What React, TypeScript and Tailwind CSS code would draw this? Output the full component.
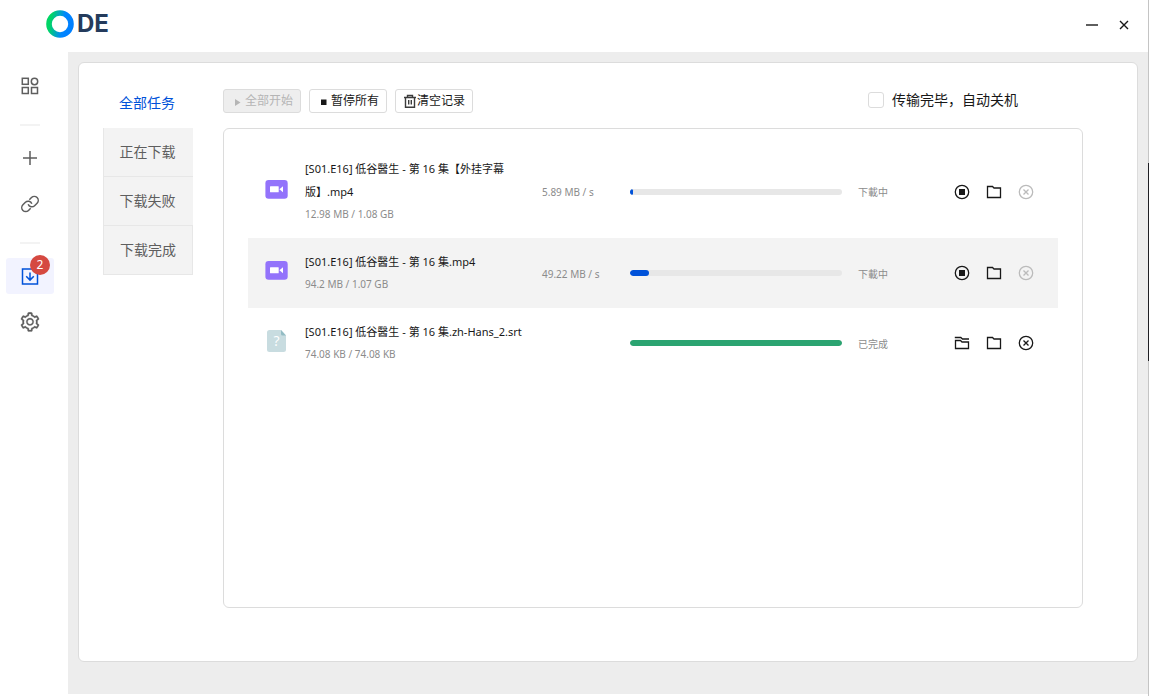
import React, { type ReactNode } from "react";
import { AiOutlineSetting } from "react-icons/ai";

type Task = {
  name: string;
  size: string;
  speed: string;
  percent: number;
  status: string;
  done: boolean;
  kind: "video" | "file";
};

const tasks: Task[] = [
  { name: "[S01.E16] 低谷醫生 - 第 16 集【外挂字幕版】.mp4", size: "12.98 MB / 1.08 GB", speed: "5.89 MB / s", percent: 1.4, status: "下載中", done: false, kind: "video" },
  { name: "[S01.E16] 低谷醫生 - 第 16 集.mp4", size: "94.2 MB / 1.07 GB", speed: "49.22 MB / s", percent: 9, status: "下載中", done: false, kind: "video" },
  { name: "[S01.E16] 低谷醫生 - 第 16 集.zh-Hans_2.srt", size: "74.08 KB / 74.08 KB", speed: "", percent: 100, status: "已完成", done: true, kind: "file" },
];

function Logo() {
  return (
    <div className="flex items-center gap-[3px]">
      <svg width="28" height="28" viewBox="0 0 28 28" aria-hidden="true">
        <defs>
          <linearGradient id="ring" x1="0" x2="1" y1="0.4" y2="0.6">
            <stop offset="0.05" stopColor="#00d566" />
            <stop offset="0.65" stopColor="#0086ff" />
            <stop offset="1" stopColor="#0080ff" />
          </linearGradient>
        </defs>
        <circle cx="14" cy="14" r="11" fill="none" stroke="url(#ring)" strokeWidth="5.6" />
      </svg>
      <span className="[font-family:Inter,sans-serif] text-2xl leading-7 font-bold text-[#243b5c]">DE</span>
    </div>
  );
}

function GridIcon() {
  return (
    <svg width="18" height="18" viewBox="0 0 18 18" fill="none" stroke="currentColor" strokeWidth="1.5" aria-hidden="true">
      <rect x="1.3" y="1.3" width="6" height="6" />
      <circle cx="13.5" cy="4.5" r="3.2" />
      <rect x="1.3" y="10.5" width="6" height="6" />
      <rect x="10.5" y="10.5" width="6" height="6" />
    </svg>
  );
}

function PlusIcon() {
  return (
    <svg width="18" height="18" viewBox="0 0 18 18" fill="none" stroke="currentColor" strokeWidth="1.5" aria-hidden="true">
      <path d="M9 2v14M2 9h14" />
    </svg>
  );
}

function ChainIcon() {
  return (
    <svg width="20" height="20" viewBox="0 0 24 24" fill="none" stroke="currentColor" strokeWidth="1.8" aria-hidden="true">
      <path d="M9.800 12.200a4.700 4.700 0 0 0 7.700 1.800l3-3a4.700 4.700 0 0 0-6.700-6.700L11.200 7" />
      <path d="M14.200 11.800a4.700 4.700 0 0 0-7.700-1.800l-3 3a4.700 4.700 0 0 0 6.700 6.700L12.800 17" />
    </svg>
  );
}

function DownloadIcon() {
  return (
    <svg width="18" height="18" viewBox="0 0 18 18" fill="none" stroke="currentColor" strokeWidth="1.5" aria-hidden="true">
      <rect x="1.5" y="2" width="15" height="15" />
      <path d="M9 5.5V13M5.2 9.3 9 13.1l3.8-3.8" />
    </svg>
  );
}

function VideoIcon() {
  return (
    <svg width="23" height="20" viewBox="0 0 23 20" aria-hidden="true">
      <rect x="0.4" y="0" width="22.3" height="18.7" rx="3.2" fill="#9373fb" />
      <rect x="5" y="6.3" width="8.7" height="6" rx="0.5" fill="#fff" />
      <path d="M14.4 9.3 18 6.3v6z" fill="#fff" />
    </svg>
  );
}

function UnknownFileIcon() {
  return (
    <svg width="23" height="23" viewBox="0 0 23 23" aria-hidden="true">
      <path d="M4.5 0H16l5 5.500v14a2.500 2.500 0 0 1-2.500 2.500h-14A2.500 2.500 0 0 1 2 19.500v-17A2.500 2.500 0 0 1 4.500 0z" fill="#c8dce0" />
      <path d="M16 0 21 5.500h-3.500A1.500 1.500 0 0 1 16 4z" fill="#93bcc4" />
      <text x="11.5" y="16" textAnchor="middle" fontSize="14" fill="#fff" fontFamily="Open Sans">?</text>
    </svg>
  );
}

function StopIcon() {
  return (
    <svg width="16" height="16" viewBox="0 0 16 16" aria-hidden="true">
      <circle cx="8" cy="8" r="6.7" fill="none" stroke="currentColor" strokeWidth="1.3" />
      <rect x="5" y="5" width="6" height="6" fill="currentColor" />
    </svg>
  );
}

function FolderIcon() {
  return (
    <svg width="16" height="16" viewBox="0 0 16 16" fill="none" stroke="currentColor" strokeWidth="1.3" aria-hidden="true">
      <path d="M1.5 2.5h5L8 4h6.500v9.500h-13z" />
    </svg>
  );
}

function OpenFolderIcon() {
  return (
    <svg width="16" height="16" viewBox="0 0 16 16" fill="none" stroke="currentColor" strokeWidth="1.3" aria-hidden="true">
      <path d="M.8 2.5h6L8.500 4h6.500" />
      <path d="M1.5 5.5h5L8 7h6.500v6.500h-13z" />
    </svg>
  );
}

function RemoveIcon() {
  return (
    <svg width="16" height="16" viewBox="0 0 16 16" fill="none" stroke="currentColor" strokeWidth="1.3" aria-hidden="true">
      <circle cx="8" cy="8" r="6.7" />
      <path d="m5.500 5.500 5 5M10.500 5.500l-5 5" />
    </svg>
  );
}

function TrashIcon() {
  return (
    <svg width="14" height="14" viewBox="0 0 14 14" fill="none" stroke="#3c3c3c" strokeWidth="1.4" aria-hidden="true">
      <path d="M2 3.500h12M5.500 3.500v-2h5v2M3.500 3.500v9.800h9V3.500M6.700 6v4.500M9.300 6v4.500" />
    </svg>
  );
}

function NavButton({ label, active, badge, children }: { label: string; active?: boolean; badge?: number; children: ReactNode }) {
  return (
    <button
      type="button"
      aria-label={label}
      className={
        active
          ? "relative flex h-9 w-12 items-center justify-center rounded-[3px] bg-[#f2f3ff] text-[#0052d9]"
          : "relative flex h-9 w-12 items-center justify-center rounded-[3px] text-[#5e5e5e]"
      }
    >
      {children}
      {badge !== undefined && (
        <span className="absolute -top-[3px] right-1 flex size-5 items-center justify-center rounded-full bg-[#d54941] text-xs text-white">
          {badge}
        </span>
      )}
    </button>
  );
}

function ToolButton({ icon, disabled, children }: { icon: ReactNode; disabled?: boolean; children: ReactNode }) {
  return (
    <button
      type="button"
      disabled={disabled}
      className="flex h-6 w-[78px] items-center justify-end rounded-[3px] border border-[#dcdcdc] bg-white pr-[7px] text-xs whitespace-nowrap text-[#181818] disabled:bg-[#eeeeee] disabled:text-[#b5b5b5]"
    >
      <span className="flex w-4 items-center justify-center">{icon}</span>
      {children}
    </button>
  );
}

function TaskRow({ task, highlighted }: { task: Task; highlighted: boolean }) {
  return (
    <li className={highlighted ? "flex items-center bg-[#f3f3f3] py-3 pr-6 pl-[17px]" : "flex items-center py-3 pr-6 pl-[17px]"}>
      <div className="w-10 shrink-0 pb-1">{task.kind === "video" ? <VideoIcon /> : <UnknownFileIcon />}</div>
      <div className="w-[237px] shrink-0 leading-[23px]">
        <p className="w-[230px] text-[11px] text-[#181818]">{task.name}</p>
        <p className="text-[10px] text-[#8b8b8b]">{task.size}</p>
      </div>
      <div className="w-[88px] shrink-0 pt-0.5 text-[10px] text-[#8b8b8b]">{task.speed}</div>
      <div
        role="progressbar"
        aria-label={task.name}
        aria-valuenow={task.percent}
        className="h-1.5 min-w-0 flex-1 overflow-hidden rounded-full bg-[#e7e7e7]"
      >
        <div
          className={task.done ? "h-full rounded-full bg-[#2ba471]" : "h-full rounded-full bg-[#0052d9]"}
          style={{ width: `${task.percent}%` }}
        />
      </div>
      <div className="ml-4 w-24 shrink-0 pt-0.5 text-[10px] text-[#8b8b8b]">{task.status}</div>
      <div className="flex shrink-0 gap-4 text-[#181818]">
        <button type="button" aria-label={task.done ? "打开文件" : "暂停"}>
          {task.done ? <OpenFolderIcon /> : <StopIcon />}
        </button>
        <button type="button" aria-label="打开文件夹">
          <FolderIcon />
        </button>
        <button type="button" aria-label="移除" disabled={!task.done} className="disabled:text-[#bbbbbb]">
          <RemoveIcon />
        </button>
      </div>
    </li>
  );
}

export default function App() {
  return (
    <div className="flex min-h-screen bg-white font-['Noto_Sans','Noto_Sans_CJK_SC',sans-serif] text-[#181818]">
      <div className="flex min-w-0 flex-1 flex-col pb-0.5">
        <header className="flex h-[52px] items-center justify-between pr-4 pb-1 pl-[46px]">
          <Logo />
          <div className="flex gap-4 pt-0.5">
            <button type="button" aria-label="最小化">
              <svg width="16" height="16" viewBox="0 0 16 16" aria-hidden="true">
                <path d="M2 8h12" stroke="#5e5e5e" strokeWidth="2" />
              </svg>
            </button>
            <button type="button" aria-label="关闭">
              <svg width="16" height="16" viewBox="0 0 16 16" aria-hidden="true">
                <path d="m4 4 8 8M12 4l-8 8" stroke="#181818" strokeWidth="1.4" />
              </svg>
            </button>
          </div>
        </header>

        <div className="flex flex-1">
          <nav aria-label="主菜单" className="flex w-[68px] shrink-0 flex-col pt-4 pl-1.5">
            <NavButton label="首页"><GridIcon /></NavButton>
            <hr className="mt-5 mb-3.5 ml-3.5 w-5 border-t-2 border-[#f3f3f3]" />
            <div className="flex flex-col gap-2.5">
              <NavButton label="新建"><PlusIcon /></NavButton>
              <NavButton label="链接"><ChainIcon /></NavButton>
            </div>
            <hr className="mt-5 mb-3.5 ml-3.5 w-5 border-t-2 border-[#f3f3f3]" />
            <div className="flex flex-col gap-2.5">
              <NavButton label="下载" active badge={2}><DownloadIcon /></NavButton>
              <NavButton label="设置"><AiOutlineSetting size={22} stroke="currentColor" strokeWidth={12} /></NavButton>
            </div>
          </nav>

          <main className="flex min-w-0 flex-1 bg-[#ededed] px-2.5 pt-2.5 pb-8">
            <section className="flex min-w-0 flex-1 gap-[30px] rounded-md border border-[#dcdcdc] bg-white pl-6">
              <div className="flex w-[90px] shrink-0 flex-col pt-4 text-sm">
                <button type="button" className="h-[49px] pr-0.5 pb-0.5 text-[#0052d9]">全部任务</button>
                <button type="button" className="h-[49px] border-b border-l border-[#e7e7e7] bg-[#f3f3f3] pr-0.5 text-[#5e5e5e]">正在下载</button>
                <button type="button" className="h-[49px] border-b border-l border-[#e7e7e7] bg-[#f3f3f3] pr-0.5 text-[#5e5e5e]">下载失败</button>
                <button type="button" className="h-[49px] border-r border-b border-l border-[#e7e7e7] bg-[#f3f3f3] text-[#5e5e5e]">下载完成</button>
              </div>

              <div className="flex min-w-0 flex-1 flex-col pr-[54px] pb-[53px]">
                <div className="flex h-[65px] shrink-0 items-center justify-between pt-2.5 pr-[65px]">
                  <div className="flex gap-2">
                    <ToolButton
                      disabled
                      icon={<svg width="8" height="10" viewBox="0 0 8 10" aria-hidden="true"><path d="M2 3v7l5.500-3.500z" fill="currentColor" /></svg>}
                    >
                      全部开始
                    </ToolButton>
                    <ToolButton
                      icon={<svg width="8" height="10" viewBox="0 0 8 10" aria-hidden="true"><rect x="2" y="3.500" width="5.500" height="5.500" fill="currentColor" /></svg>}
                    >
                      暂停所有
                    </ToolButton>
                    <ToolButton icon={<TrashIcon />}>清空记录</ToolButton>
                  </div>
                  <label className="flex items-center gap-2 pb-0.5 text-sm">
                    <input type="checkbox" className="size-4 appearance-none rounded-[3px] border border-[#dcdcdc] bg-white checked:bg-[#0052d9]" />
                    传输完毕，自动关机
                  </label>
                </div>

                <div className="flex-1 rounded-md border border-[#dcdcdc] px-6 py-4">
                  <ul>
                    {tasks.map((task, i) => (
                      <TaskRow key={task.name} task={task} highlighted={i % 2 === 1} />
                    ))}
                  </ul>
                </div>
              </div>
            </section>
          </main>
        </div>
      </div>

      <div className="flex w-px shrink-0 flex-col bg-[#c4c4c4] pt-[163px]">
        <div className="h-[198px] bg-[#1f1f24]" />
      </div>
    </div>
  );
}
